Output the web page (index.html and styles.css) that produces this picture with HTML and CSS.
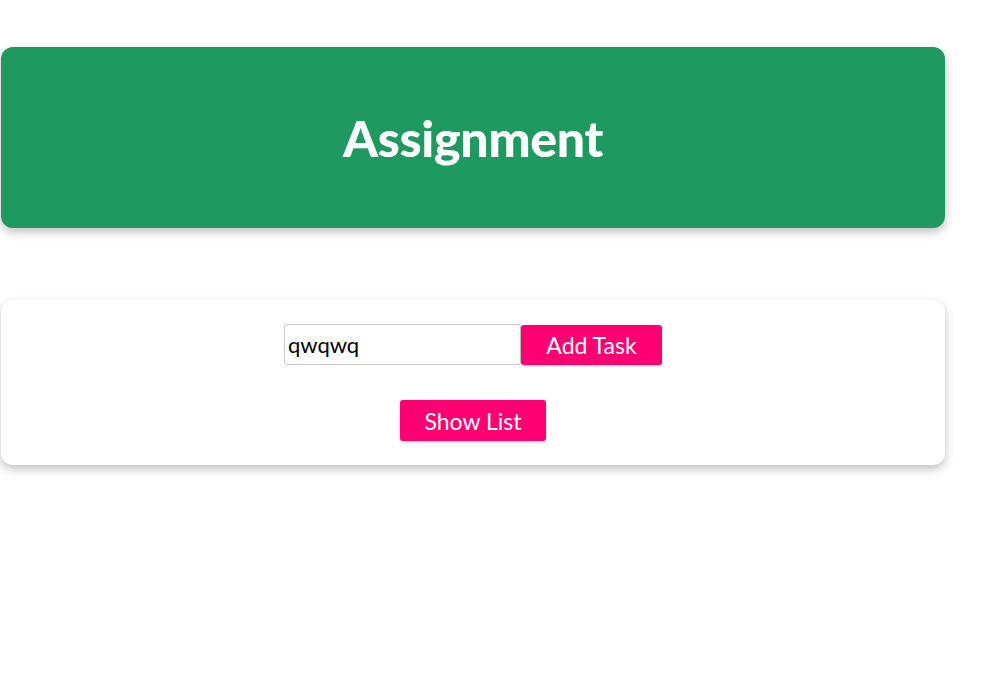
FILE: index.html
```html
<!DOCTYPE html>
<html>
<head>
<meta charset="utf-8">
<link rel="stylesheet" href="styles.css">
</head>
<body>
<div class="page">
  <header class="banner">
    <h1 class="title">Assignment</h1>
  </header>
  <section class="panel">
    <div class="row">
      <input class="task-input" type="text" value="qwqwq">
      <button class="btn">Add Task</button>
    </div>
    <div class="row">
      <button class="btn btn-wide">Show List</button>
    </div>
  </section>
</div>
</body>
</html>
```
FILE: styles.css
```css
* { box-sizing: border-box; }
html, body { margin: 0; padding: 0; background: #fff; }
body { font-family: "Lato", "Noto Sans", sans-serif; }
.page {
  width: 944px;
  margin-left: 1px;
  padding-top: 47px;
  padding-bottom: 60px;
  display: flex;
  flex-direction: column;
  gap: 72px;
}
.banner {
  height: 181px;
  background: #1e9960;
  border-radius: 12px;
  box-shadow: 0 4px 10px rgba(0,0,0,0.25);
  display: flex;
  align-items: center;
  justify-content: center;
}
.title {
  margin: 0;
  color: #fff;
  font-size: 50px;
  font-weight: 900;
  letter-spacing: -0.3px;
}
.panel {
  background: #fff;
  border-radius: 12px;
  box-shadow: 0 4px 10px rgba(0,0,0,0.25);
  padding: 24px 0;
  display: flex;
  flex-direction: column;
  align-items: center;
  gap: 35px;
}
.row { display: flex; align-items: center; }
.task-input {
  width: 237px;
  height: 41px;
  border: 1px solid #c8c8c8;
  border-radius: 3px;
  padding: 0 3px;
  font-family: "Lato", sans-serif;
  font-size: 22px;
  color: #000;
  outline: none;
}
.btn {
  height: 40px;
  width: 141px;
  border: none;
  border-radius: 3px;
  background: #ff0073;
  color: #fff;
  font-family: "Lato", sans-serif;
  font-size: 23px;
  box-shadow: 0 1px 3px rgba(0,0,0,0.2);
  padding: 0;
}
.btn-wide { width: 146px; height: 41px; }
```
